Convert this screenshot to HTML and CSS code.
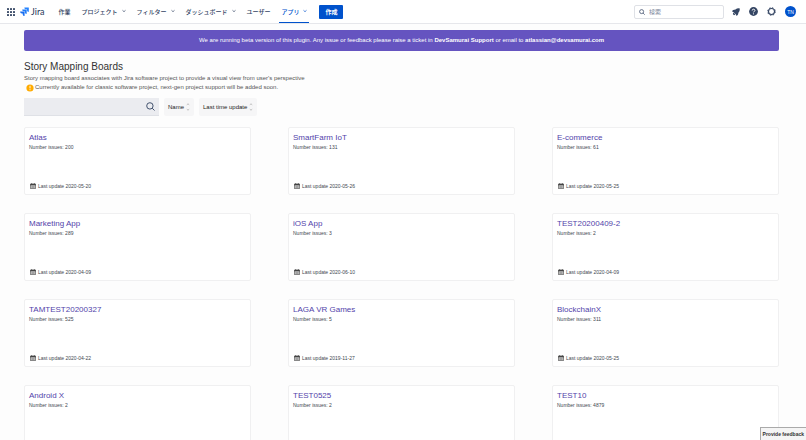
FILE: index.html
```html
<!DOCTYPE html>
<html lang="en">
<head>
  <meta charset="UTF-8" />
  <meta name="viewport" content="width=device-width, initial-scale=1.0" />
  <title>Story Mapping Boards</title>
  <link rel="stylesheet" href="styles.css">
</head>
<body>
  <header class="top-bar">
    <button class="icon-button switcher" aria-label="Apps">
      <svg width="8" height="8" viewBox="0 0 8 8" fill="#344563">
        <rect x="0" y="0" width="2" height="2" rx=".4"/><rect x="3" y="0" width="2" height="2" rx=".4"/><rect x="6" y="0" width="2" height="2" rx=".4"/>
        <rect x="0" y="3" width="2" height="2" rx=".4"/><rect x="3" y="3" width="2" height="2" rx=".4"/><rect x="6" y="3" width="2" height="2" rx=".4"/>
        <rect x="0" y="6" width="2" height="2" rx=".4"/><rect x="3" y="6" width="2" height="2" rx=".4"/><rect x="6" y="6" width="2" height="2" rx=".4"/>
      </svg>
    </button>
    <a class="logo" href="#">
      <svg width="9" height="9" viewBox="0 0 24 24">
        <path fill="#2684ff" d="M23 1H11.500a5 5 0 0 0 5 5h2v2a5 5 0 0 0 5 5V2z"/>
        <path fill="#1f7cf8" d="M17.300 6.500H5.800a5 5 0 0 0 5 5h2v2a5 5 0 0 0 5 5v-11z"/>
        <path fill="#1a6ff0" d="M11.600 12H.2a5 5 0 0 0 5 5h2v2a5 5 0 0 0 5 5V13z"/>
      </svg>
      <span>Jira</span>
    </a>
    <nav class="nav">
      <a href="#">作業</a>
      <a href="#">プロジェクト <svg class="chevron" viewBox="0 0 4 4"><path d="M.5 1.300 2 2.700 3.500 1.300"/></svg></a>
      <a href="#">フィルター <svg class="chevron" viewBox="0 0 4 4"><path d="M.5 1.300 2 2.700 3.500 1.300"/></svg></a>
      <a href="#">ダッシュボード <svg class="chevron" viewBox="0 0 4 4"><path d="M.5 1.300 2 2.700 3.500 1.300"/></svg></a>
      <a href="#">ユーザー</a>
      <a href="#" class="active">アプリ <svg class="chevron" viewBox="0 0 4 4"><path d="M.5 1.300 2 2.700 3.500 1.300"/></svg></a>
    </nav>
    <button class="create-button">作成</button>
    <div class="actions">
      <label class="search">
        <svg width="6" height="6" viewBox="0 0 6 6" fill="none" stroke="#42526e" stroke-width=".8"><circle cx="2.600" cy="2.600" r="2"/><path d="M4.100 4.100 5.700 5.700"/></svg>
        <input type="text" placeholder="検索" aria-label="検索">
      </label>
      <button class="icon-button" aria-label="Notifications">
        <svg width="8" height="8" viewBox="0 0 8 8" fill="#344563"><path d="M7.700.4C5.800.2 4.500.6 3.500 1.400L1.200 2C.7 2.200.3 2.900.1 3.600l1.500.6L4 6.500l.5 1.400c.7-.3 1.300-.7 1.500-1.300l.5-2.100C7.500 3.400 7.900 2.200 7.700.4z"/><path d="M1.500 4.600 3.400 6.500 2 7.300.8 6.100z"/></svg>
      </button>
      <button class="icon-button" aria-label="Help">
        <svg width="9" height="9" viewBox="0 0 9 9" fill="none"><circle cx="4.500" cy="4.500" r="4.400" fill="#344563"/><path d="M3.200 3.500C3.200 1.700 5.900 1.800 5.900 3.500 5.900 4.500 4.500 4.400 4.500 5.400" stroke="#fff"/><circle cx="4.500" cy="6.800" r=".6" fill="#fff"/></svg>
      </button>
      <button class="icon-button" aria-label="Settings">
        <svg width="9" height="9" viewBox="0 0 9 9" fill="none" stroke="#344563"><circle cx="4.500" cy="4.500" r="3" stroke-width="1.100"/><circle cx="4.500" cy="4.500" r="3.800" stroke-width="1" stroke-dasharray="1.500 1.485"/></svg>
      </button>
      <button class="avatar">TN</button>
    </div>
  </header>

  <main class="content">
    <div class="banner">
      We are running beta version of this plugin. Any issue or feedback please raise a ticket in <b>DevSamurai Support</b> or email to <b>atlassian@devsamurai.com</b>
    </div>

    <h1>Story Mapping Boards</h1>
    <p class="intro">Story mapping board associates with Jira software project to provide a visual view from user's perspective</p>
    <p class="intro notice">
      <svg width="8" height="8" viewBox="0 0 8 8"><circle cx="4" cy="4" r="3.600" fill="#ffab00"/><path d="M4 1.800v2.600M4 5.200v1" stroke="#fff" stroke-width=".9"/></svg>
      Currently available for classic software project, next-gen project support will be added soon.
    </p>

    <div class="toolbar">
      <label class="filter">
        <input type="text" aria-label="Search boards">
        <svg width="9" height="9" viewBox="0 0 9 9" fill="none" stroke="#42526e"><circle cx="3.900" cy="3.900" r="3.200"/><path d="M6.200 6.200 8.500 8.500"/></svg>
      </label>
      <button class="sort-button">Name <svg class="sort" viewBox="0 0 4 8"><path d="M.8 1.800 2 .8 3.200 1.800M.8 6.200 2 7.200 3.200 6.200"/></svg></button>
      <button class="sort-button">Last time update <svg class="sort" viewBox="0 0 4 8"><path d="M.8 1.800 2 .8 3.200 1.800M.8 6.200 2 7.200 3.200 6.200"/></svg></button>
    </div>

    <div class="boards" id="boards"></div>
  </main>

  <button class="feedback-button">Provide feedback</button>

  <script src="script.js"></script>
</body>
</html>
```
FILE: styles.css
```css
body {
  margin: 0;
  height: 100vh;
  overflow: hidden;
  font-family: "Liberation Sans", Arial, "Noto Sans CJK JP", sans-serif;
  font-size: 6px;
  color: #42474f;
  background-color: #fdfdfd;
}

button,
input {
  font-family: inherit;
  font-size: 6px;
  border: none;
  padding: 0;
  margin: 0;
  background: none;
  outline: none;
}

button {
  cursor: pointer;
}

a {
  text-decoration: none;
}

svg {
  display: block;
  flex-shrink: 0;
}

/* Top navigation */
.top-bar {
  display: flex;
  align-items: center;
  height: 24px;
  padding: 0 10px 0 7px;
  background-color: #fff;
  border-bottom: 1px solid #e6e7eb;
  box-sizing: border-box;
}

.nav a {
  color: #344563;
}

.logo {
  display: flex;
  align-items: center;
  gap: 2px;
  margin: 0 12px 0 5px;
  font-family: Lato, sans-serif;
  font-size: 9px;
  color: #253858;
}

.nav {
  display: flex;
  align-self: stretch;
  gap: 7px;
}

.nav a {
  display: flex;
  align-items: center;
  gap: 4px;
  padding: 0 2px;
  font-weight: 500;
  white-space: nowrap;
  border-bottom: 1px solid transparent;
}

.nav .active {
  color: #0052cc;
  border-color: #0052cc;
}

.chevron {
  width: 4px;
  height: 4px;
  fill: none;
  stroke: currentColor;
  stroke-width: 0.7;
}

.create-button {
  height: 14px;
  margin-left: 10px;
  padding: 0 6px;
  border-radius: 1px;
  font-weight: bold;
  color: #fff;
  background-color: #0052cc;
}

.actions {
  display: flex;
  align-items: center;
  gap: 5px;
  margin-left: auto;
}

.search {
  display: flex;
  align-items: center;
  gap: 4px;
  width: 90px;
  height: 14px;
  padding: 0 4px;
  border: 1px solid #dfe1e6;
  border-radius: 2px;
  box-sizing: border-box;
}

.search input {
  flex: 1;
  min-width: 0;
}

.search input::placeholder {
  color: #7a869a;
}

.icon-button {
  display: flex;
  align-items: center;
  justify-content: center;
  width: 13px;
  height: 13px;
}

.switcher {
  width: 8px;
}

.avatar {
  width: 11px;
  height: 11px;
  margin-left: 2px;
  border-radius: 50%;
  font-size: 5px;
  color: #fff;
  background-color: #0052cc;
}

.switcher,
.logo,
.nav,
.create-button {
  flex-shrink: 0;
}

/* Page content */
.content {
  padding: 6px 27px 0 24px;
}

.banner {
  padding: 5px;
  border-radius: 2px;
  line-height: 11px;
  text-align: center;
  color: #fff;
  background-color: #6554c0;
}

h1 {
  margin: 10px 0 1px;
  font-size: 10px;
  line-height: 12px;
  font-weight: normal;
  color: #333;
}

.intro {
  margin: 0;
  line-height: 9px;
  color: #555;
}

.notice {
  display: flex;
  align-items: center;
  gap: 1px;
  padding-left: 2px;
}

.toolbar {
  display: flex;
  gap: 5px;
  margin: 6px 0 11px;
}

.filter {
  display: flex;
  align-items: center;
  width: 135px;
  height: 18px;
  padding: 0 4px;
  border-bottom: 1px solid #dfe1e6;
  box-sizing: border-box;
  background-color: #ebecf0;
}

.filter input {
  flex: 1;
  min-width: 0;
}

.sort-button {
  display: flex;
  align-items: center;
  gap: 2px;
  padding: 0 4px;
  border-radius: 2px;
  color: #222;
  background-color: #f6f6f7;
}

.sort {
  width: 4px;
  height: 8px;
  fill: none;
  stroke: #999;
  stroke-width: 0.6;
}

/* Board cards */
.boards {
  display: grid;
  grid-template-columns: repeat(3, 1fr);
  gap: 18px 37px;
}

.card {
  display: flex;
  flex-direction: column;
  height: 68px;
  padding: 5px 4px;
  border: 1px solid #f0f0f1;
  border-radius: 2px;
  box-sizing: border-box;
  background-color: #fff;
}

.card-title {
  font-size: 8px;
  line-height: 10px;
  color: #5243aa;
}

.card-issues,
.card-update {
  font-size: 5px;
  line-height: 8px;
}

.card-update {
  display: flex;
  align-items: center;
  gap: 2px;
  margin-top: auto;
  padding-left: 1px;
  line-height: 6px;
}

.feedback-button {
  position: fixed;
  right: 0;
  bottom: 0;
  height: 13px;
  padding: 0 2px;
  border: 1px solid #aaa;
  border-right: none;
  border-bottom: none;
  font-size: 5px;
  font-weight: bold;
  color: #333;
  background-color: #f5f5f5;
}
```
FILE: script.js
```javascript
const boards = [
  { name: 'Atlas', issues: 200, updated: '2020-05-20' },
  { name: 'SmartFarm IoT', issues: 131, updated: '2020-05-26' },
  { name: 'E-commerce', issues: 61, updated: '2020-05-25' },
  { name: 'Marketing App', issues: 289, updated: '2020-04-09' },
  { name: 'iOS App', issues: 3, updated: '2020-06-10' },
  { name: 'TEST20200409-2', issues: 2, updated: '2020-04-09' },
  { name: 'TAMTEST20200327', issues: 525, updated: '2020-04-22' },
  { name: 'LAGA VR Games', issues: 5, updated: '2019-11-27' },
  { name: 'BlockchainX', issues: 311, updated: '2020-05-25' },
  { name: 'Android X', issues: 2 },
  { name: 'TEST0525', issues: 2 },
  { name: 'TEST10', issues: 4879 }
];

const calendar = '<svg width="6" height="6" viewBox="0 0 6 6"><path d="M.4 1h5.200v4.600H.4z" fill="#fff" stroke="#444" stroke-width=".7"/><path d="M.4.900h5.200v1.600H.4zM1.300.2h.8v1h-.8zM3.900.2h.8v1h-.8zM1.200 3.300h3.600v.5H1.200zM1.200 4.300h3.600v.5H1.200z" fill="#444"/></svg>';

// Boards without a date only show the issue count
document.getElementById('boards').innerHTML = boards.map(board => `
  <div class="card">
    <a class="card-title" href="#">${board.name}</a>
    <div class="card-issues">Number issues: ${board.issues}</div>
    ${board.updated ? `<div class="card-update">${calendar}<span>Last update ${board.updated}</span></div>` : ''}
  </div>`).join('');
```
